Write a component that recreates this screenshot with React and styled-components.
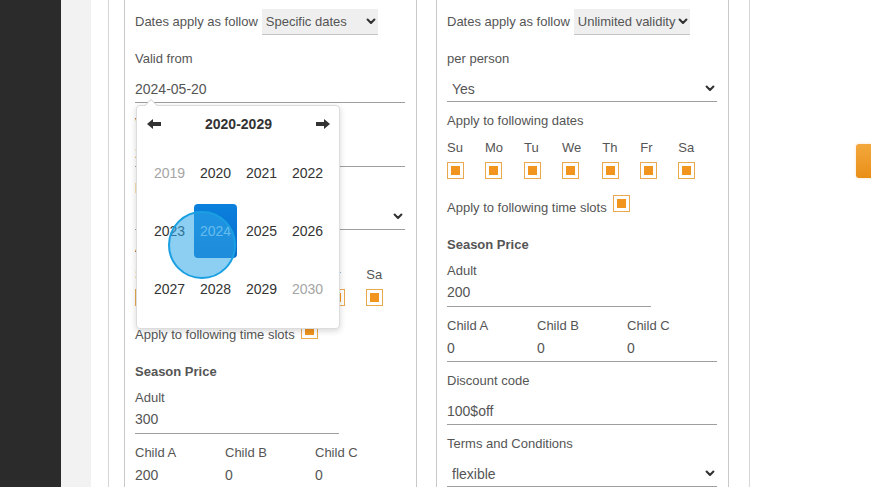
import React from 'react';
import styled, { createGlobalStyle } from 'styled-components';

const GlobalStyle = createGlobalStyle`
  html, body {
    margin: 0;
    padding: 0;
    background: #fff;
  }
  body {
    font-family: "Liberation Sans", Arial, sans-serif;
    overflow: hidden;
  }
  * {
    box-sizing: border-box;
  }
`;

const Page = styled.div`
  position: relative;
  display: flex;
  height: 487px;
  overflow: hidden;
`;

const Sidebar = styled.aside`
  width: 61px;
  flex-shrink: 0;
  background: #2b2b2b;
`;

const Gutter = styled.div`
  width: 30px;
  flex-shrink: 0;
  background: #f2f2f2;
`;

const Main = styled.main`
  flex: 1;
  padding-left: 17px;
  background: #fff;
`;

const Container = styled.div`
  display: flex;
  gap: 19px;
  width: 642px;
  min-height: 100%;
  padding: 0 20px 0 15px;
  border-left: 1px solid #d6d6d6;
  border-right: 1px solid #d6d6d6;
`;

const Panel = styled.section`
  display: flex;
  flex-direction: column;
  width: 293px;
  flex-shrink: 0;
  padding: 9px 11px 0 10px;
  border: 1px solid #c9c9c9;
  border-top: none;
  color: #555;
  font-size: 13px;

  & > * {
    flex-shrink: 0;
  }
`;

const FollowRow = styled.div`
  display: flex;
  align-items: center;
  height: 26px;
  line-height: 14px;
`;

const SelectBox = styled.div`
  display: flex;
  align-items: center;
  width: 116px;
  height: 26px;
  margin-left: 4px;
  padding: 0 2px 0 4px;
  background: #efefef;
  border-bottom: 1px solid #c4c4c4;
  color: #555;
  font-size: 13px;
  white-space: nowrap;
`;

const SelectText = styled.span`
  flex: 1;
  overflow: hidden;
`;

const Label = styled.div`
  margin-top: ${(p) => p.$mt ?? 11}px;
  padding-top: 1px;
  line-height: 14px;
`;

const SectionTitle = styled.div`
  margin-top: 22px;
  padding-top: 1px;
  line-height: 14px;
  font-weight: bold;
`;

const FieldWrap = styled.div`
  position: relative;
  margin-top: ${(p) => p.$mt ?? 8}px;
`;

const LineInput = styled.div`
  display: flex;
  align-items: center;
  width: ${(p) => p.$width || '100%'};
  height: ${(p) => p.$height || 28}px;
  padding: ${(p) => (p.$raise ? '0 2px 2px' : '2px 2px 0')};
  padding-left: ${(p) => (p.$select ? 5 : 0)}px;
  border-bottom: 1px solid #9e9e9e;
  font-size: 14px;
  color: #555;
`;

const Weekdays = styled.div`
  display: flex;
  gap: 21px;
  margin-top: 12px;
`;

const Day = styled.div`
  display: flex;
  flex-direction: column;
  gap: 7px;
  min-width: 17px;
  padding-top: 1px;
  line-height: 14px;
`;

const Check = styled.span`
  display: flex;
  align-items: center;
  justify-content: center;
  width: 17px;
  height: 17px;
  flex-shrink: 0;
  margin-bottom: ${(p) => p.$mb || 0}px;
  border: 1px solid #eba94f;
  background: #fff;

  &::after {
    content: '';
    width: 9px;
    height: 9px;
    background: #f1951f;
  }
`;

const SlotRow = styled.div`
  display: flex;
  align-items: flex-end;
  gap: 6px;
  margin-top: 16px;
  line-height: 14px;
`;

const ChildGrid = styled.div`
  display: grid;
  grid-template-columns: repeat(3, 90px);
  align-items: center;
  margin-top: ${(p) => p.$mt}px;
  padding-top: ${(p) => (p.$values ? 0 : 1)}px;
  line-height: 14px;
  font-size: ${(p) => (p.$values ? 14 : 13)}px;
  height: ${(p) => (p.$values ? '28px' : 'auto')};
  border-bottom: ${(p) => (p.$values ? '1px solid #9e9e9e' : 'none')};
`;

const Picker = styled.div`
  position: absolute;
  top: 31px;
  left: 1px;
  z-index: 5;
  width: 204px;
  height: 224px;
  padding: 0 9px 0 10px;
  background: #fff;
  border: 1px solid #dcdcdc;
  border-radius: 4px;
  box-shadow: 0 2px 6px rgba(0, 0, 0, 0.16);
  color: #333;

  &::before,
  &::after {
    content: '';
    position: absolute;
    left: 7px;
    border-left: 7px solid transparent;
    border-right: 7px solid transparent;
  }
  &::before {
    top: -7px;
    border-bottom: 7px solid #d0d0d0;
  }
  &::after {
    top: -6px;
    left: 8px;
    border-left-width: 6px;
    border-right-width: 6px;
    border-bottom: 6px solid #fff;
  }
`;

const PickerHead = styled.div`
  display: flex;
  align-items: center;
  justify-content: space-between;
  height: 36px;
  font-size: 14px;
  font-weight: bold;
`;

const YearGrid = styled.div`
  display: grid;
  grid-template-columns: repeat(4, 46px);
  grid-auto-rows: 58px;
  margin-top: 2px;
`;

const YearCell = styled.div`
  padding: 2px 2px 2px 1px;
`;

const Year = styled.div`
  display: flex;
  align-items: center;
  justify-content: center;
  height: 100%;
  border-radius: 4px;
  font-size: 14px;
  color: ${(p) => (p.$selected ? '#a6d6f5' : p.$muted ? '#a5a5a5' : '#333')};
  background: ${(p) => (p.$selected ? 'linear-gradient(#0b80dd, #0a6ccc)' : 'transparent')};
`;

const Touch = styled.span`
  position: absolute;
  left: 31px;
  top: 105px;
  width: 68px;
  height: 68px;
  border-radius: 50%;
  border: 2px solid #1aa0e2;
  background: rgba(48, 168, 232, 0.55);
  pointer-events: none;
`;

const SideTab = styled.div`
  position: absolute;
  left: 856px;
  top: 144px;
  width: 24px;
  height: 34px;
  border-radius: 3px;
  background: linear-gradient(#f3a83c, #e98f18);
  box-shadow: 0 0 3px rgba(240, 160, 60, 0.3);
`;

const Chevron = () => (
  <svg width="10" height="7" viewBox="0 0 10 7" style={{ flexShrink: 0 }}>
    <polyline points="1.6,1.6 5,5 8.4,1.6" fill="none" stroke="#333" strokeWidth="2.1" strokeLinecap="round" strokeLinejoin="round" />
  </svg>
);

// heavy arrow used by the picker header; flip for the right one
const Arrow = ({ right }) => (
  <svg width="14" height="10" viewBox="0 0 14 10" style={right ? { transform: 'scaleX(-1)' } : undefined}>
    <polygon points="0,5 6,0 6,3 14,3 14,7 6,7 6,10" fill="#333" />
  </svg>
);

const days = ['Su', 'Mo', 'Tu', 'We', 'Th', 'Fr', 'Sa'];
const years = [2019, 2020, 2021, 2022, 2023, 2024, 2025, 2026, 2027, 2028, 2029, 2030];

function DatePicker() {
  return (
    <Picker>
      <PickerHead>
        <Arrow />
        <span>2020-2029</span>
        <Arrow right />
      </PickerHead>
      <YearGrid>
        {years.map((y) => (
          <YearCell key={y}>
            <Year $selected={y === 2024} $muted={y === 2019 || y === 2030}>{y}</Year>
          </YearCell>
        ))}
      </YearGrid>
      <Touch />
    </Picker>
  );
}

function DaysAndPrices({ applyMt, adult, children }) {
  return (
    <>
      <Label $mt={applyMt}>Apply to following dates</Label>
      <Weekdays>
        {days.map((d) => (
          <Day key={d}>
            <span>{d}</span>
            <Check />
          </Day>
        ))}
      </Weekdays>
      <SlotRow>
        <span>Apply to following time slots</span>
        <Check $mb={3} />
      </SlotRow>
      <SectionTitle>Season Price</SectionTitle>
      <Label $mt={11}>Adult</Label>
      <FieldWrap $mt={1}>
        <LineInput $width="204px" $raise>{adult}</LineInput>
      </FieldWrap>
      <ChildGrid $mt={11}>
        <span>Child A</span>
        <span>Child B</span>
        <span>Child C</span>
      </ChildGrid>
      <ChildGrid $mt={1} $values>
        {children.map((c, i) => (
          <span key={i}>{c}</span>
        ))}
      </ChildGrid>
    </>
  );
}

export default function App() {
  return (
    <Page>
      <GlobalStyle />
      <Sidebar />
      <Gutter />
      <Main>
        <Container>
          <Panel>
            <FollowRow>
              Dates apply as follow
              <SelectBox>
                <SelectText>Specific dates</SelectText>
                <Chevron />
              </SelectBox>
            </FollowRow>
            <Label $mt={16}>Valid from</Label>
            <FieldWrap>
              <LineInput $height={29}>2024-05-20</LineInput>
              <DatePicker />
            </FieldWrap>
            <Label $mt={12}>Valid until</Label>
            <FieldWrap>
              <LineInput $height={29}>2024-12-31</LineInput>
            </FieldWrap>
            <Label>per person</Label>
            <FieldWrap>
              <LineInput $select $height={29}>
                <SelectText>Yes</SelectText>
                <Chevron />
              </LineInput>
            </FieldWrap>
            <DaysAndPrices applyMt={10} adult="300" children={['200', '0', '0']} />
          </Panel>

          <Panel>
            <FollowRow>
              Dates apply as follow
              <SelectBox>
                <SelectText>Unlimited validity</SelectText>
                <Chevron />
              </SelectBox>
            </FollowRow>
            <Label $mt={16}>per person</Label>
            <FieldWrap>
              <LineInput $select>
                <SelectText>Yes</SelectText>
                <Chevron />
              </LineInput>
            </FieldWrap>
            <DaysAndPrices applyMt={11} adult="200" children={['0', '0', '0']} />
            <Label>Discount code</Label>
            <FieldWrap>
              <LineInput $height={29}>100$off</LineInput>
            </FieldWrap>
            <Label>Terms and Conditions</Label>
            <FieldWrap>
              <LineInput $select>
                <SelectText>flexible</SelectText>
                <Chevron />
              </LineInput>
            </FieldWrap>
          </Panel>
        </Container>
      </Main>
      <SideTab />
    </Page>
  );
}
